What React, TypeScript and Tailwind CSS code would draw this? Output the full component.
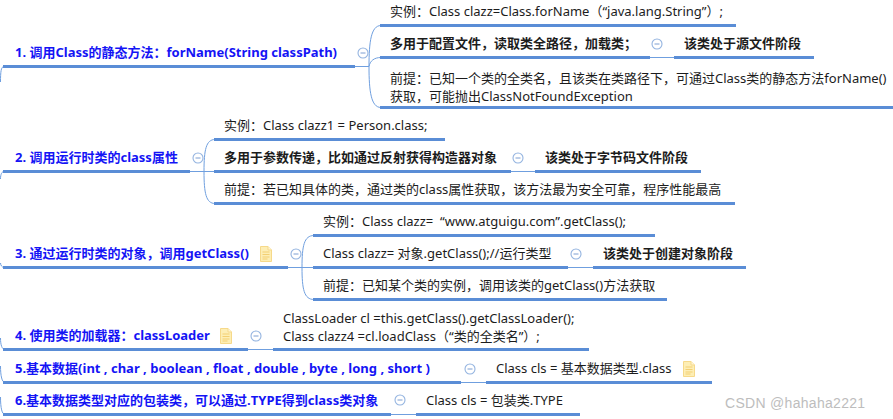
const font = "font-['Noto_Sans','Noto_Sans_CJK_SC',sans-serif]";

function Toggle({ className }: { className: string }) {
  return (
    <svg viewBox="0 0 12 12" className={`absolute h-3 w-3 ${className}`}>
      <circle cx="6" cy="6" r="5" fill="#fff" stroke="#94b4e0" strokeWidth="1.1" />
      <path d="M3.5 6h5" stroke="#7d9ed2" strokeWidth="1" />
    </svg>
  );
}

function Note({ className = "" }: { className?: string }) {
  return (
    <svg viewBox="0 0 12 16" className={`h-4 w-3 shrink-0 ${className}`}>
      <path d="M.5.5h7.5l3.5 3.5v11.5H.5z" fill="#fdeeb5" stroke="#f6d98a" />
      <path d="M8 .5v3.5h3.5" fill="#fff6d8" stroke="#f6d98a" />
      <path d="M2.5 6h7M2.5 8.5h7M2.5 11h7M2.5 13h5" stroke="#f3cf72" strokeWidth="1" />
    </svg>
  );
}

const title = "absolute box-border flex h-[27px] items-center whitespace-pre border-b-[3px] border-[#5a8dd6] pl-3 text-[13px] font-bold text-[#1414f5]";
const leaf = "absolute box-border flex h-[27px] items-center whitespace-pre border-b-[3px] border-[#5a8dd6] pl-[10px] text-[13px] text-[#1c1c1c]";
const strong = "absolute box-border flex h-[27px] items-center whitespace-pre border-b-[3px] border-[#5a8dd6] pl-[10px] text-[13px] font-bold text-[#1c1c1c]";

export default function App() {
  return (
    <div className={`relative h-[419px] w-[893px] overflow-hidden bg-white ${font}`}>
      <svg viewBox="0 0 893 419" className="absolute inset-0 h-[419px] w-[893px]" fill="none" stroke="#6f9fdf" strokeWidth="1">
        {/* trunk stubs */}
        <path d="M4 66.5C1 66.5 .5 72 .5 82M4 171.5C2 171.5 .5 174 .5 179M.5 263C.5 265 2 267.5 4 267.5M.5 338C.5 345 2 349.5 5 349.5M.5 366C.5 376 2 382.5 5 382.5M.5 397C.5 408 2 414.5 5 414.5" />
        {/* row 1 */}
        <path d="M355 66.5H369M369 66.5C369 42 371 25.5 381 25.5M369 66.5C369 91 371 107.5 381 107.5M369 66.5C370 61 374 57.5 381 57.5M649 57.5H674" />
        {/* row 2 */}
        <path d="M190 171.5H214M204 171.5C204 150 206 139.5 215 139.5M204 171.5C204 193 206 203.5 215 203.5M510 171.5H535" />
        {/* row 3 */}
        <path d="M288 267.5H313M302 267.5C302 246 304 235.5 314 235.5M302 267.5C302 289 304 299.5 314 299.5M568 267.5H593" />
        {/* rows 4-6 */}
        <path d="M248 349.5H273M461 382.5H486M391 414.5H416" />
      </svg>

      {/* 1 */}
      <div className={`${title} left-[3px] top-[41px] w-[352px]`}>1. 调用Class的静态方法：forName(String classPath)</div>
      <Toggle className="left-[357px] top-[47px]" />
      <div className={`${leaf} left-[380px] top-0 w-[356px]`}>实例：Class clazz=Class.forName（“java.lang.String”）;</div>
      <div className={`${strong} left-[380px] top-[32px] w-[270px]`}>多用于配置文件，读取类全路径，加载类；</div>
      <Toggle className="left-[651px] top-[38px]" />
      <div className={`${strong} left-[674px] top-[32px] w-[140px]`}>该类处于源文件阶段</div>
      <div className={`${leaf} left-[380px] top-[67px] h-[42px] w-[513px] leading-[18px]`}>
        <div>前提：已知一个类的全类名，且该类在类路径下，可通过Class类的静态方法forName()<br />获取，可能抛出ClassNotFoundException</div>
      </div>

      {/* 2 */}
      <div className={`${title} left-[3px] top-[146px] w-[187px]`}>2. 调用运行时类的class属性</div>
      <Toggle className="left-[192px] top-[152px]" />
      <div className={`${leaf} left-[214px] top-[114px] w-[231px]`}>实例：Class clazz1 = Person.class;</div>
      <div className={`${strong} left-[214px] top-[146px] w-[297px]`}>多用于参数传递，比如通过反射获得构造器对象</div>
      <Toggle className="left-[512px] top-[152px]" />
      <div className={`${strong} left-[535px] top-[146px] w-[166px]`}>该类处于字节码文件阶段</div>
      <div className={`${leaf} left-[214px] top-[178px] w-[521px]`}>前提：若已知具体的类，通过类的class属性获取，该方法最为安全可靠，程序性能最高</div>

      {/* 3 */}
      <div className={`${title} left-[3px] top-[242px] w-[285px]`}>
        3. 通过运行时类的对象，调用getClass()
        <Note className="ml-[11px] -mt-[1px]" />
      </div>
      <Toggle className="left-[290px] top-[248px]" />
      <div className={`${leaf} left-[313px] top-[210px] w-[342px]`}>实例：Class clazz=  “www.atguigu.com”.getClass();</div>
      <div className={`${leaf} left-[313px] top-[242px] w-[255px]`}>Class clazz= 对象.getClass();//运行类型</div>
      <Toggle className="left-[570px] top-[248px]" />
      <div className={`${strong} left-[593px] top-[242px] w-[153px]`}>该类处于创建对象阶段</div>
      <div className={`${leaf} left-[313px] top-[274px] w-[354px]`}>前提：已知某个类的实例，调用该类的getClass()方法获取</div>

      {/* 4 */}
      <div className={`${title} left-[3px] top-[324px] w-[245px]`}>
        4. 使用类的加载器：classLoader
        <Note className="ml-[10px] -mt-[1px]" />
      </div>
      <Toggle className="left-[250px] top-[330px]" />
      <div className={`${leaf} left-[273px] top-[306px] h-[45px] w-[316px] leading-[18px]`}>
        <div>ClassLoader cl =this.getClass().getClassLoader();<br />Class clazz4 =cl.loadClass（“类的全类名”）;</div>
      </div>

      {/* 5 */}
      <div className={`${title} left-[3px] top-[357px] w-[458px]`}>5.基本数据(int , char , boolean , float , double , byte , long , short )</div>
      <Toggle className="left-[464px] top-[363px]" />
      <div className={`${leaf} left-[486px] top-[357px] w-[226px]`}>
        Class cls = 基本数据类型.class
        <Note className="ml-[11px] -mt-[1px]" />
      </div>

      {/* 6 */}
      <div className={`${title} left-[3px] top-[389px] w-[388px]`}>6.基本数据类型对应的包装类，可以通过.TYPE得到class类对象</div>
      <Toggle className="left-[394px] top-[394px]" />
      <div className={`${leaf} left-[416px] top-[389px] w-[164px]`}>Class cls = 包装类.TYPE</div>

      <div className="absolute left-[725px] top-[394px] font-['Liberation_Sans',sans-serif] text-[14px] leading-[18px] tracking-[.3px] text-[#bdbdbd]">CSDN @hahaha2221</div>
    </div>
  );
}
